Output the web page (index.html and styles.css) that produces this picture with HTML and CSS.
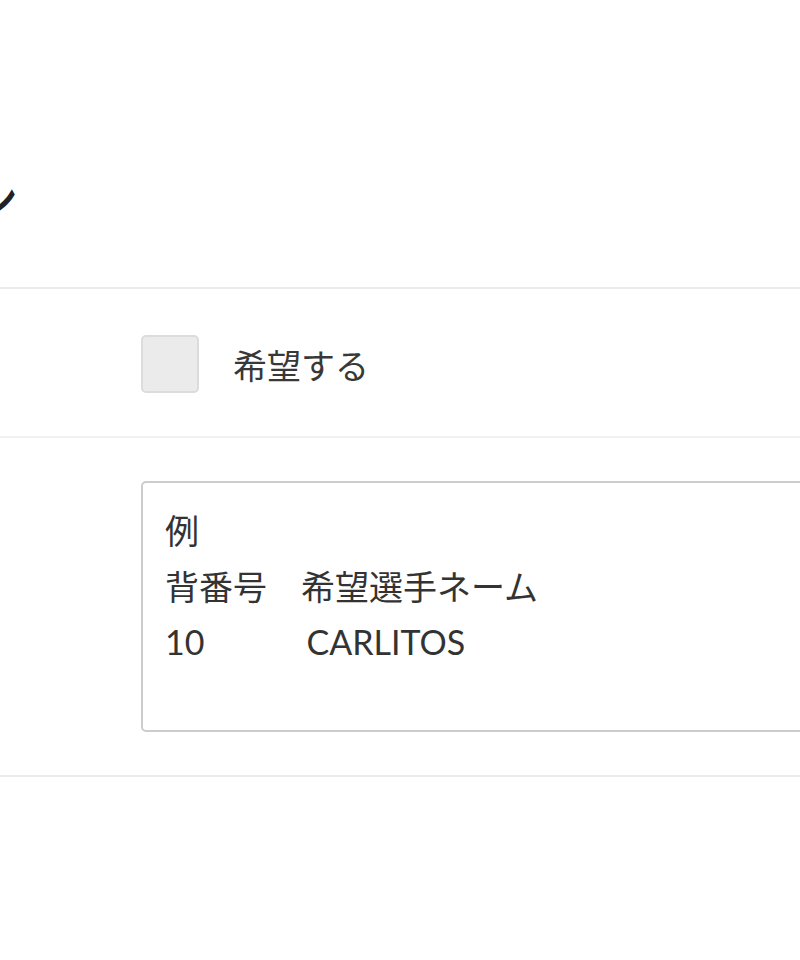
FILE: index.html
```html
<!DOCTYPE html>
<html lang="ja">
<head>
<meta charset="utf-8">
<link rel="stylesheet" href="styles.css">
</head>
<body>
<div class="page">
  <header class="head">
    <h2 class="title"><span class="title-text">ン</span></h2>
  </header>
  <div class="row row-check">
    <div class="label"></div>
    <label class="check">
      <span class="box"></span>
      <span class="check-text">希望する</span>
    </label>
  </div>
  <div class="row row-area">
    <div class="label"></div>
    <div class="area">例
背番号　希望選手ネーム
10　　　CARLITOS</div>
  </div>
</div>
</body>
</html>
```
FILE: styles.css
```css
html, body {
  margin: 0;
  padding: 0;
  background: #ffffff;
}
body {
  font-family: Lato, "Noto Sans CJK JP", sans-serif;
  color: #333333;
  overflow: hidden;
}
.page {
  width: 800px;
  overflow: hidden;
}
.head {
  height: 287px;
  display: flex;
  align-items: flex-start;
}
.title {
  margin: 172px 0 0 -30px;
  font-size: 48px;
  font-weight: 500;
  line-height: 1;
  color: #222222;
  font-family: "Noto Sans CJK JP", sans-serif;
}
.row {
  display: flex;
  border-top: 2px solid #ececec;
}
.label {
  width: 141px;
  flex: none;
}
.row-check {
  height: 147px;
  align-items: center;
}
.check {
  display: flex;
  align-items: center;
  gap: 34px;
  font-size: 34px;
  margin-top: 3px;
}
.box {
  width: 54px;
  height: 54px;
  border: 2px solid #dcdcdc;
  border-radius: 5px;
  background: #ebebeb;
  display: block;
}
.check-text {
  font-family: "Noto Sans CJK JP", sans-serif;
  color: #383838;
}
.row-area {
  border-top-color: #f1f1f1;
  padding: 43px 0 43px;
  border-bottom: 2px solid #ececec;
}
.area {
  flex: none;
  width: 700px;
  height: 207px;
  border: 2px solid #cccccc;
  border-radius: 5px;
  padding: 20px 22px;
  white-space: pre;
  font-size: 34px;
  line-height: 55.5px;
  color: #333333;
}
```
